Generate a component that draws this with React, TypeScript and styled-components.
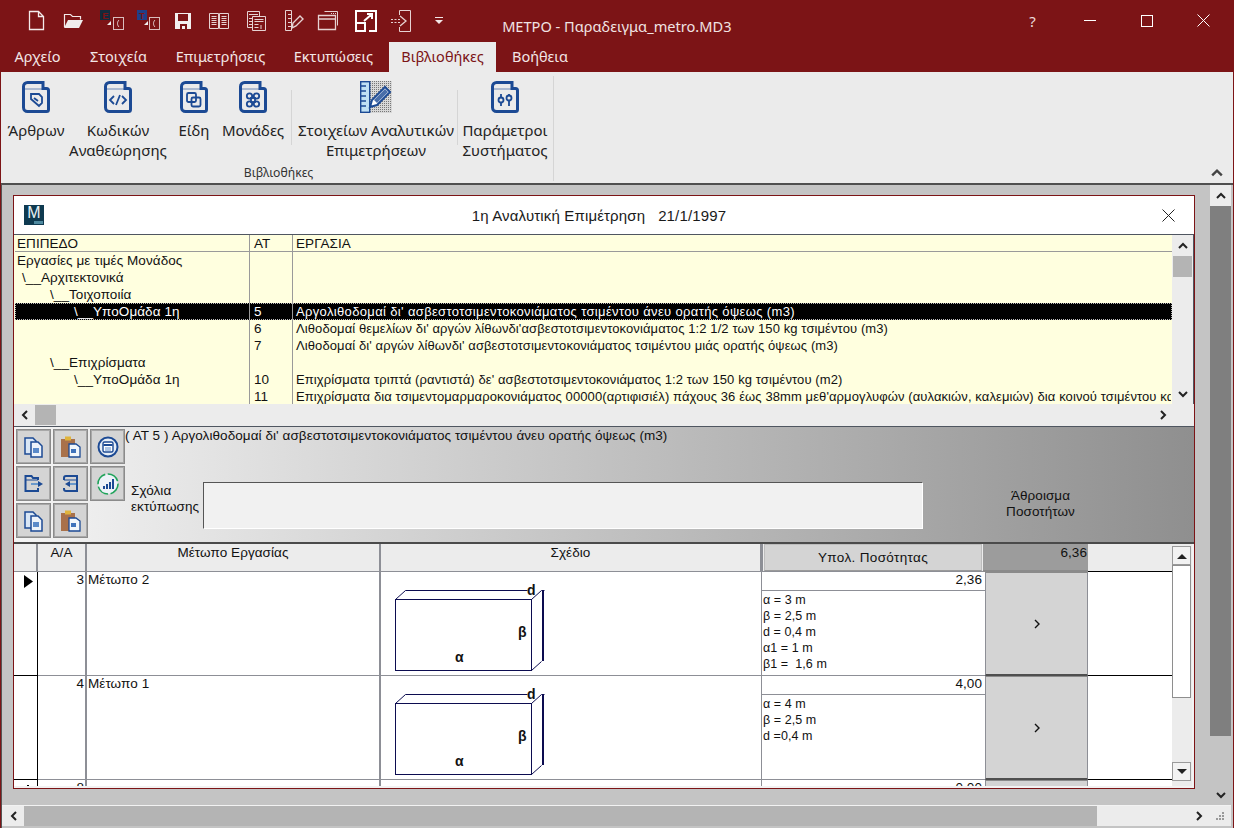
import React from "react";
import styled, { createGlobalStyle } from "styled-components";

const RED = "#7c1416";
const BLUE = "#1c4a94";
const GRIDLINE = "#8d8f96";

const Global = createGlobalStyle`
  html, body { margin: 0; padding: 0; background: ${RED}; overflow: hidden; }
  * { box-sizing: border-box; }
`;

const AppWindow = styled.div`
  width: 1234px; height: 828px; background: ${RED};
  display: flex; flex-direction: column; padding: 0 1px;
  font-family: "Liberation Sans", Arial, sans-serif; font-size: 13.5px; letter-spacing: .07px; color: #111; overflow: hidden;
`;
const TitleBar = styled.div`height: 42px; display: flex; align-items: center; flex: none; padding-bottom: 1px; letter-spacing: 0;`;
const Qat = styled.div`display: flex; margin-left: 17px;`;
const QatBtn = styled.div`width: 36.6px; height: 24px; display: flex; justify-content: center; svg { display:block; overflow: visible; }`;
const AppTitle = styled.div`margin: 11px 0 0 45px; font-family: "Noto Sans", sans-serif; font-size: 14.6px; color: #f1e3e3; white-space: nowrap;`;
const WinControls = styled.div`margin-left: auto; display: flex; margin-right: 1px;`;
const WinBtn = styled.div`width: 57px; height: 30px; display: flex; align-items: center; justify-content: center; color: #ecdcdc; font-family:"Noto Sans",sans-serif; font-size: 15px;`;

const Tabs = styled.div`height: 30px; display: flex; flex: none; letter-spacing: 0;`;
const Tab = styled.div<{ $active?: boolean; $w: number }>`
  width: ${p => p.$w}px; height: 30px; display: flex; align-items: center; justify-content: center;
  font-family: "Noto Sans", sans-serif; font-size: 14.5px; padding-bottom: 2px;
  color: ${p => (p.$active ? RED : "#f3e6e6")};
  background: ${p => (p.$active ? "#ebebeb" : "transparent")};
`;

const Ribbon = styled.div`height: 111px; background: #ebebeb; flex: none; position: relative; display: flex; letter-spacing: 0;`;
const RibbonGroup = styled.div`width: 553px; padding-left: 3px; border-right: 1px solid #d5d5d5; margin: 4px 0 2px; display: flex; flex-direction: column; justify-content: space-between;`;
const RibbonItems = styled.div`display: flex;`;
const RibbonItem = styled.div<{ $w: number }>`
  width: ${p => p.$w}px; flex: none; display: flex; flex-direction: column; align-items: center; padding-top: 5px;
  svg { display: block; margin-bottom: 7px; }
`;
const RibbonLabel = styled.div`
  font-family: "Noto Sans", sans-serif; font-size: 15px; line-height: 20px; color: #222; text-align: center; white-space: nowrap;
`;
const RibbonSep = styled.div<{ $l: number; $r: number }>`width: 1px; height: 55px; flex: none; background: #d5d5d5; margin: 14px ${p => p.$r}px 0 ${p => p.$l}px;`;
const GroupLabel = styled.div`text-align: center; font-family: "Noto Sans", sans-serif; font-size: 12.2px; color: #333; line-height: 16px;`;
const Collapse = styled.div`position: absolute; right: 10px; bottom: 4px; svg { display: block; }`;

const Mdi = styled.div`
  flex: 1; min-height: 0; display: grid; grid-template-columns: 1fr 21px; grid-template-rows: 1fr 20px;
  background: #c4c4c4; border-top: 2px solid #4f4f4f; border-left: 1px solid #555; padding: 0 2px 2px 0;
`;
const MdiCanvas = styled.div`padding: 10px 0 0 11px; min-width: 0; min-height: 0; border-bottom: 1px solid #f2f2f2;`;
const MdiV = styled.div`display: flex; flex-direction: column; background: #c4c4c4; border-bottom: 1px solid #f2f2f2;`;
const ArrowBox = styled.div<{ $h?: number; $bg?: string }>`
  height: ${p => p.$h ?? 20}px; flex: none; display: flex; align-items: center; justify-content: center; background: ${p => p.$bg ?? "#ececec"};
  svg { display: block; }
`;
const MdiThumb = styled.div`height: 530px; background: #7f7f7f; flex: none;`;
const Fill = styled.div`flex: 1;`;
const MdiH = styled.div`display: flex; grid-column: 1 / 3; background: #ececec; height: 20px; padding-left: 1px;`;
const HArrow = styled.div<{ $w?: number }>`width: ${p => p.$w ?? 21}px; flex: none; display: flex; align-items: center; justify-content: center; svg { display: block; }`;
const MdiHThumb = styled.div`width: 1073px; background: #b4b4b4; flex: none;`;

const Child = styled.div`
  width: 1182px; height: 594px; border: 1px solid ${RED}; background: #f2f2f2;
  display: flex; flex-direction: column; overflow: hidden; position: relative;
`;
const ChildTitle = styled.div`
  height: 39px; flex: none; background: #fff; border-bottom: 1px solid #4f5660;
  display: flex; align-items: center; padding: 0 19px 0 10px; position: relative;
`;
const Logo = styled.div`
  width: 20px; height: 20px; background: #0f3a50; color: #e8f2f5; font-size: 16px; line-height: 16px; text-align: center; position: relative; letter-spacing: 0;
  &::after { content: ""; position: absolute; right: 1px; bottom: 1px; width: 9px; height: 3px; background: #4f8aa0; }
`;
const ChildCaption = styled.div`
  position: absolute; left: 0; right: 10px; text-align: center; font-size: 15px; letter-spacing: .15px; color: #1a1a1a; white-space: pre;
`;
const CloseX = styled.div`margin-left: auto; svg { display: block; }`;

const Upper = styled.div`height: 169px; flex: none; display: flex; border-right: 1px solid #4f5660;`;
const TreeGrid = styled.div`flex: 1; min-width: 0; background: #ffffdf; padding-left: 1px; overflow: hidden;`;
const TreeRow = styled.div<{ $selected?: boolean; $head?: boolean }>`
  display: grid; grid-template-columns: 235px 43px 878px; height: 17px; line-height: 17px; white-space: nowrap; overflow: hidden;
  background: ${p => (p.$selected ? "#000" : "transparent")};
  color: ${p => (p.$selected ? "#fff" : "#111")};
  ${p => p.$head && `border-bottom: 1px solid #9a9a9a;`}
  ${p => p.$selected && `outline: 1px dotted #bbb; outline-offset: -1px;`}
`;
const TreeCell = styled.div<{ $indent?: number }>`
  padding-left: ${p => 2 + (p.$indent ?? 0)}px; border-right: 1px solid #9a9a9a; overflow: hidden;
  &:last-child { border-right: none; padding-left: 3px; }
  &:nth-child(2) { padding-left: 4px; }
`;
const WorkCell = styled(TreeCell)<{ $wide?: boolean }>`
  font-size: 13px; letter-spacing: ${p => (p.$wide ? ".35px" : ".1px")};
`;
const VBar = styled.div<{ $w?: number }>`width: ${p => p.$w ?? 20}px; flex: none; background: #ececec; display: flex; flex-direction: column;`;
const SmallThumb = styled.div`height: 21px; margin: 0 1px; background: #b4b4b4; flex: none;`;
const HBar = styled.div`height: 23px; flex: none; background: #ececec; display: flex; border-bottom: 1px solid #4f5660;`;
const HThumb = styled.div`width: 21px; margin: 1px 0; background: #b4b4b4;`;
const Spacer = styled.div`flex: 1;`;

const Panel = styled.div`
  height: 117px; flex: none; display: flex; border-bottom: 2px solid #4a4a4a;
  background: linear-gradient(90deg, #f4f4f4 0%, #8f8f8f 100%);
`;
const ToolGrid = styled.div`
  width: 111px; flex: none; display: grid; grid-template-columns: repeat(3, 35px); grid-auto-rows: 35px; gap: 2px; padding: 2px 0 0 2px; align-content: start;
`;
const ToolBtn = styled.div`
  background: #d4d4d4; border: 1px solid #8b8b8b; box-shadow: inset 0 0 0 1px #a8a8a8; display: flex; align-items: center; justify-content: center;
  svg { display: block; }
`;
const PanelBody = styled.div`flex: 1; display: flex; flex-direction: column; min-width: 0;`;
const PanelHeading = styled.div`height: 20px; line-height: 18px; white-space: nowrap;`;
const PanelRow = styled.div`display: flex; align-items: flex-start; margin-top: 35px; padding-left: 6px;`;
const CommentLabel = styled.div`width: 72px; line-height: 16px; margin-top: 1px; flex: none;`;
const CommentBox = styled.div`
  width: 720px; height: 47px; background: #f1f1f1;
  border: 1px solid; border-color: #555 #fff #fff #555; flex: none;
`;
const SumLabel = styled.div`width: 235px; margin-top: 6px; text-align: center; line-height: 16px; flex: none;`;

const Lower = styled.div`flex: 1; min-height: 0; display: flex; background: #f2f2f2; overflow: hidden;`;
const Table = styled.div`
  width: 1158px; height: 242px; flex: none; overflow: hidden; background: #fff;
  display: grid; grid-template-columns: 24px 49px 294px 381px 223px 103px 84px;
  grid-template-rows: 28px 104px 104px 104px;
`;
const Head = styled.div<{ $line?: boolean }>`
  background: #ececec; text-align: center; line-height: 16px; padding-top: 1px;
  border-bottom: 1px solid ${p => (p.$line ? "#000" : GRIDLINE)};
  ${p => p.$line === undefined && `border-right: 2px solid ${GRIDLINE};`}
`;
const HeadBtn = styled.div`
  background: #ececec; padding: 0 3px 0 1px; border-bottom: 1px solid ${GRIDLINE}; border-left: 1px solid ${GRIDLINE};
  & > div { height: 27px; background: #d4d4d4; border: 1px solid #bdbdbd; border-bottom: 1px solid #9a9a9a; text-align: center; line-height: 25px; letter-spacing: .35px; }
`;
const HeadSum = styled.div`background: #9c9c9c; margin-left: -2px; text-align: right; padding: 1px 1px 0 0; line-height: 15px; border-bottom: 2px solid #8a8a8a;`;
const IndicatorCell = styled.div`border-right: 1px solid #000; border-bottom: 1px solid #000; padding: 3px 0 0 10px; position: relative; svg { display: block; }`;
const Dot = styled.div`width: 2px; height: 2px; background: #000; margin: 2px 0 0 3px;`;
const NumCell = styled.div`border-right: 2px solid ${GRIDLINE}; border-bottom: 1px solid ${GRIDLINE}; text-align: right; padding: 0 1px 0 0; line-height: 16px;`;
const NameCell = styled.div`border-right: 2px solid ${GRIDLINE}; border-bottom: 1px solid ${GRIDLINE}; padding-left: 1px; line-height: 16px;`;
const SketchCell = styled.div`border-right: 1px solid ${GRIDLINE}; border-bottom: 1px solid ${GRIDLINE}; svg { display: block; }`;
const CalcCell = styled.div`border-bottom: 1px solid ${GRIDLINE}; display: flex; flex-direction: column; min-height: 0; overflow: hidden;`;
const CalcValue = styled.div`height: 19px; flex: none; text-align: right; padding-right: 3px; line-height: 16px; border-bottom: 1px solid ${GRIDLINE};`;
const CalcLines = styled.div`padding: 1px 0 0 1px; line-height: 16px; white-space: pre; font-size: 12.5px;`;
const GoBtn = styled.div`
  background: #d4d4d4; border: 1px solid ${GRIDLINE}; border-bottom: 2px solid #4f4f4f; border-top: 1px solid #8a8a8a;
  display: flex; align-items: center; justify-content: center; svg { display: block; }
`;
const BlankCell = styled.div`border-bottom: 1px solid #000; background: #fff;`;
const LowerScroll = styled.div`width: 20px; height: 242px; flex: none; background: #ececec; display: flex; flex-direction: column; padding: 2px 1px 5px 0;`;
const LowerBtn = styled.div`height: 19px; flex: none; border: 1px solid #9a9a9a; background: #f2f2f2; display: flex; align-items: center; justify-content: center; svg { display: block; }`;
const LowerThumb = styled.div`height: 133px; flex: none; border: 1px solid #8e8e8e; background: #fff;`;

const Chevron = ({ dir, size = 10, c = "#222", w = 2 }: { dir: "u" | "d" | "l" | "r"; size?: number; c?: string; w?: number }) => {
  const d = { u: "M1 7l4-4 4 4", d: "M1 3l4 4 4-4", l: "M7 1L3 5l4 4", r: "M3 1l4 4-4 4" }[dir];
  return <svg width={size} height={size} viewBox="0 0 10 10"><path d={d} fill="none" stroke={c} strokeWidth={w} /></svg>;
};

const W = "#f4eaea";
const QatIcons: React.ReactNode[] = [
  <path key="a" d="M5.500 2.500h9l5 5v13h-14zM14.500 2.500v5h5" fill="none" stroke={W} strokeWidth="1.3" />,
  <g key="b"><path d="M3.500 18V5.500h6l2 2h8v3" fill="none" stroke={W} strokeWidth="1.2" /><path d="M3 19l4-8h15l-4 8z" fill="#f0eded" /></g>,
  <g key="c"><rect x="3" y="1" width="10" height="10" fill="#132a3c" /><text x="5.200" y="9.500" fontSize="9.500" fontWeight="bold" fontFamily="Liberation Sans" fill="#7c1416">E</text><path d="M10 16l4-4v4z" fill="#eee" /><rect x="16.500" y="8.500" width="10" height="12" fill="none" stroke="#d9bdbd" /><path d="M22 11c-2 2-2 5 0 7" fill="none" stroke="#e8d8d8" /></g>,
  <g key="d"><rect x="3" y="1" width="10" height="10" fill="#1f3f88" /><text x="5" y="9.500" fontSize="9.500" fontWeight="bold" fontFamily="Liberation Sans" fill="#7c1416">T</text><path d="M10 16l4-4v4z" fill="#eee" /><rect x="15.500" y="8.500" width="10" height="12" fill="none" stroke="#d9bdbd" /><path d="M21 11c-2 2-2 5 0 7" fill="none" stroke="#e8d8d8" /></g>,
  <path key="e" d="M4 4h16v16H4zM7 5v7h10V5zM9 15v5h2v-3h3v3h2v-5z" fill="#f3efef" fillRule="evenodd" />,
  <g key="f" fill="none" stroke="#e6d2d2"><path d="M2.500 4.500h9v15h-9zM12.500 4.500h9v15h-9z" /><path d="M4.500 7.500h5M4.500 9.500h5M4.500 11.500h5M4.500 13.500h5M4.500 15.500h5M14.500 7.500h5M14.500 9.500h5M14.500 11.500h5M14.500 13.500h5M14.500 15.500h5" /></g>,
  <g key="g" fill="none" stroke="#e6d2d2"><path d="M3.500 2.500h12v16h-12z" /><path d="M8.500 7.500h13v14h-13z" fill="#7c1416" /><path d="M5 5.500h9M5 9.500h3M5 12.500h3M5 15.500h3M10.500 10.500h9M10.500 12.500h9M10.500 15.500h4M10.500 18.500h4M17 16v4" /></g>,
  <g key="h" fill="none" stroke="#e6d2d2"><path d="M5.500 1.500h6v20h-6zM8 5.500h3M8 9.500h3M8 13.500h3M8 17.500h3" /><path d="M12 19l1-5 7-7 3 3-7 7z" strokeWidth="1.400" /></g>,
  <g key="i" fill="none" stroke="#e6d2d2"><path d="M7.500 2.500h13v14" /><path d="M1.500 6.500h17v14h-17zM1.500 10h17" strokeWidth="1.300" /><path d="M14 4.500h5" strokeDasharray="1 1" /></g>,
  <g key="j" fill="none" stroke="#fff" strokeWidth="2"><path d="M8 2h14v20H15M2 14V2h6M2 14v8h9v-8zM10 12l8-7M13 5h5v5" /></g>,
  <g key="k" fill="none" stroke="#e6d2d2"><path d="M9.500 1.500h11v21h-11V18M9.500 6V1.500" /><path d="M1 10.500h9M1 13.500h9" strokeDasharray="2 1.500" /><path d="M10 7l6 5-6 5" strokeWidth="1.300" /></g>,
  <path key="l" d="M8 8h8v1H8zM8 11h8l-4 4z" fill="#f2e6e6" />,
];

const BookFrame = ({ children }: { children: React.ReactNode }) => (
  <svg width="28" height="32" viewBox="0 0 28 32">
    <path d="M1.500 5.500a4 4 0 0 1 4-4h15.500v6h3.500a2 2 0 0 1 2 2v19a2 2 0 0 1-2 2h-19a4 4 0 0 1-4-4z" fill="#ebebeb" stroke={BLUE} strokeWidth="3" />
    <path d="M2 8h19" stroke={BLUE} strokeWidth="1" opacity=".6" />
    <g fill="none" stroke={BLUE} strokeWidth="1.800">{children}</g>
  </svg>
);

const RulerPencil = () => (
  <svg width="32" height="32" viewBox="0 0 32 32">
    <defs><pattern id="dots" width="2" height="2" patternUnits="userSpaceOnUse"><rect width="2" height="2" fill="#d8d8d8" /><rect width="1" height="1" fill="#777" /></pattern></defs>
    <rect x="9" y="0" width="23" height="32" fill="url(#dots)" />
    <rect x=".7" y=".7" width="9" height="30.600" fill="#bfe0f4" stroke={BLUE} strokeWidth="1.400" />
    <path d="M1 5h5M1 10h5M1 15h5M1 20h5M1 25h5" stroke={BLUE} strokeWidth="1.300" />
    <path d="M10 26l2-7L25 6l5 5-13 13z" fill="#fff" stroke={BLUE} strokeWidth="2" />
    <path d="M14 19l11-11 3 3-11 11z" fill={BLUE} opacity=".8" />
  </svg>
);

const Docs = () => (
  <svg width="24" height="24" viewBox="0 0 24 24"><g fill="#d9e6f5" stroke={BLUE} strokeWidth="1.500"><path d="M3 3h8l3 3v13H3z" /><path d="M9 7h7l4 4v11H9z" fill="#eef3fa" /></g><rect x="11" y="13" width="6" height="5" fill="#5b8ac9" /></svg>
);
const Clip = () => (
  <svg width="24" height="24" viewBox="0 0 24 24"><rect x="2" y="4" width="14" height="18" fill="#a9714a" /><rect x="6" y="1.500" width="6" height="4" fill="#e0b43c" /><path d="M10 9h7l4 3v10H10z" fill="#f2f6fb" stroke={BLUE} strokeWidth="1.300" /><rect x="12" y="14" width="5" height="4" fill="#3f72bb" /></svg>
);
const CalcCircle = () => (
  <svg width="22" height="22" viewBox="0 0 22 22"><circle cx="11" cy="11" r="9.500" fill="#e7eef7" stroke={BLUE} strokeWidth="2" /><rect x="6" y="6" width="10" height="10" rx="1.500" fill="#fff" stroke={BLUE} strokeWidth="1.400" /><path d="M6.500 9h9" stroke={BLUE} strokeWidth="2" /><path d="M8 12h6M8 14h6" stroke="#5b8ac9" /></svg>
);
const Out = () => (
  <svg width="24" height="22" viewBox="0 0 24 22"><path d="M16 7V5h-5L9.500 3H3.500v15H16v-3" fill="none" stroke={BLUE} strokeWidth="2" /><path d="M3.500 7H16" stroke={BLUE} /><path d="M9 11h8" stroke="#4f8ac9" strokeWidth="1.600" /><path d="M16 8l5 3-5 3z" fill={BLUE} /></svg>
);
const In = () => (
  <svg width="24" height="22" viewBox="0 0 24 22"><path d="M5 7V5a2 2 0 0 1 2-2h11v15H7a2 2 0 0 1-2-2v-1" fill="none" stroke={BLUE} strokeWidth="2" /><path d="M5 7h13" stroke={BLUE} /><path d="M9 11h8" stroke="#4f8ac9" strokeWidth="1.600" /><path d="M11 8l-5 3 5 3z" fill={BLUE} /></svg>
);
const ChartCircle = () => (
  <svg width="24" height="24" viewBox="0 0 24 24"><circle cx="12" cy="12" r="10" fill="#eef2f8" stroke="#1fa35a" strokeWidth="1.600" strokeDasharray="13 2.500" /><path d="M7 17v-3h2v3zM10 17v-5h2v5zM13 17v-7h2v7zM16 17V7h2v10z" fill={BLUE} /></svg>
);

const Box = () => (
  <svg width="200" height="103" viewBox="0 0 200 103">
    <g fill="none" stroke="#0c0c50" strokeWidth="1">
      <rect x="14.500" y="27.500" width="136" height="71" />
      <path d="M14.500 27.500l10-9h122M150.500 27.500l10-9h3M150.500 98.500l10-9" />
      <path d="M162 18v71" strokeWidth="2" />
    </g>
    <g fontFamily="Liberation Sans, sans-serif" fontWeight="bold" fontSize="14" fill="#111">
      <text x="146" y="23">d</text>
      <text x="137" y="65">β</text>
      <text x="74" y="90">α</text>
    </g>
  </svg>
);

const Arrow = () => <svg width="9" height="13" viewBox="0 0 9 13"><path d="M0 0l9 6.500-9 6.500z" fill="#000" /></svg>;

const tree: { a: string; i?: number; b?: string; c?: string; s?: boolean }[] = [
  { a: "Εργασίες με τιμές Μονάδος" },
  { a: "\\__Αρχιτεκτονικά", i: 5 },
  { a: "\\__Τοιχοποιία", i: 33 },
  { a: "\\__ΥποΟμάδα 1η", i: 57, b: "5", c: "Αργολιθοδομαί δι' ασβεστοτσιμεντοκονιάματος τσιμέντου άνευ ορατής όψεως (m3)", s: true },
  { a: "", b: "6", c: "Λιθοδομαί θεμελίων δι' αργών λίθωνδι'ασβεστοτσιμεντοκονιάματος 1:2 1/2 των 150 kg τσιμέντου (m3)" },
  { a: "", b: "7", c: "Λιθοδομαί δι' αργών λίθωνδι' ασβεστοτσιμεντοκονιάματος τσιμέντου μιάς ορατής όψεως (m3)" },
  { a: "\\__Επιχρίσματα", i: 33 },
  { a: "\\__ΥποΟμάδα 1η", i: 57, b: "10", c: "Επιχρίσματα τριπτά (ραντιστά) δε' ασβεστοτσιμεντοκονιάματος 1:2 των 150 kg τσιμέντου (m2)" },
  { a: "", b: "11", c: "Επιχρίσματα δια τσιμεντομαρμαροκονιάματος 00000(αρτιφισιέλ) πάχους 36 έως 38mm μεθ'αρμογλυφών (αυλακιών, καλεμιών) δια κοινού τσιμέντου κα" },
];

const rows = [
  { n: "3", name: "Μέτωπο 2", value: "2,36", lines: "α = 3 m\nβ = 2,5 m\nd = 0,4 m\nα1 = 1 m\nβ1 =  1,6 m", current: true },
  { n: "4", name: "Μέτωπο 1", value: "4,00", lines: "α = 4 m\nβ = 2,5 m\nd =0,4 m" },
  { n: "8", name: "", value: "0,00", lines: "", partial: true },
];

const ribbonItems = [
  { w: 64, l: "Άρθρων", g: <path d="M9 13h8l3 3v6l-3 3-8-7zM12 17l4 3" /> },
  { w: 100, l: "Κωδικών\nΑναθεώρησης", g: <path d="M10 15l-4 4 4 4M18 15l4 4-4 4M16 14l-4 10" /> },
  { w: 52, l: "Είδη", g: <><rect x="7" y="12" width="9" height="9" rx="1.500" /><rect x="11.500" y="16.500" width="9" height="9" rx="1.500" /></> },
  { w: 66, l: "Μονάδες", g: <><circle cx="10.500" cy="15" r="2.700" /><circle cx="17.500" cy="15" r="2.700" /><circle cx="10.500" cy="23" r="2.700" /><circle cx="17.500" cy="23" r="2.700" /><rect x="12" y="17" width="4" height="4" /></> },
];

export default function App() {
  return (
    <>
      <Global />
      <AppWindow>
        <TitleBar>
          <Qat>
            {QatIcons.map((ic, i) => (
              <QatBtn key={i}><svg width="24" height="24" viewBox="0 0 24 24">{ic}</svg></QatBtn>
            ))}
          </Qat>
          <AppTitle>ΜΕΤΡΟ - Παραδειγμα_metro.MD3</AppTitle>
          <WinControls>
            <WinBtn>?</WinBtn>
            <WinBtn><svg width="12" height="2"><rect width="12" height="1" fill="#fff" /></svg></WinBtn>
            <WinBtn><svg width="12" height="12"><rect x=".5" y=".5" width="11" height="11" fill="none" stroke="#fff" /></svg></WinBtn>
            <WinBtn><svg width="13" height="13"><path d="M.5.5l12 12M12.500.5l-12 12" stroke="#fff" fill="none" /></svg></WinBtn>
          </WinControls>
        </TitleBar>
        <Tabs>
          <Tab $w={73}>Αρχείο</Tab>
          <Tab $w={89}>Στοιχεία</Tab>
          <Tab $w={115}>Επιμετρήσεις</Tab>
          <Tab $w={111}>Εκτυπώσεις</Tab>
          <Tab $w={107} $active>Βιβλιοθήκες</Tab>
          <Tab $w={88}>Βοήθεια</Tab>
        </Tabs>
        <Ribbon>
          <RibbonGroup>
            <RibbonItems>
              {ribbonItems.map(it => (
                <RibbonItem key={it.l} $w={it.w}>
                  <BookFrame>{it.g}</BookFrame>
                  <RibbonLabel>{it.l.split("\n").map(t => <div key={t}>{t}</div>)}</RibbonLabel>
                </RibbonItem>
              ))}
              <RibbonSep $l={5} $r={4} />
              <RibbonItem $w={160}>
                <RulerPencil />
                <RibbonLabel><div>Στοιχείων Αναλυτικών</div><div>Επιμετρήσεων</div></RibbonLabel>
              </RibbonItem>
              <RibbonSep $l={1} $r={1} />
              <RibbonItem $w={92}>
                <BookFrame>
                  <path d="M10 13v3M10 22v3M18 13v1M18 20v5" />
                  <circle cx="10" cy="19" r="2.500" /><circle cx="18" cy="17" r="2.500" />
                </BookFrame>
                <RibbonLabel><div>Παράμετροι</div><div>Συστήματος</div></RibbonLabel>
              </RibbonItem>
            </RibbonItems>
            <GroupLabel>Βιβλιοθήκες</GroupLabel>
          </RibbonGroup>
          <Collapse><Chevron dir="u" size={12} c="#444" /></Collapse>
        </Ribbon>
        <Mdi>
          <MdiCanvas>
            <Child>
              <ChildTitle>
                <Logo>M</Logo>
                <ChildCaption>1η Αναλυτική Επιμέτρηση   21/1/1997</ChildCaption>
                <CloseX><svg width="13" height="13"><path d="M.5.5l12 12M12.500.5l-12 12" stroke="#222" fill="none" /></svg></CloseX>
              </ChildTitle>
              <Upper>
                <TreeGrid>
                  <TreeRow $head><TreeCell>ΕΠΙΠΕΔΟ</TreeCell><TreeCell>ΑΤ</TreeCell><TreeCell>ΕΡΓΑΣΙΑ</TreeCell></TreeRow>
                  {tree.map((r, i) => (
                    <TreeRow key={i} $selected={r.s}>
                      <TreeCell $indent={r.i}>{r.a}</TreeCell>
                      <TreeCell>{r.b}</TreeCell>
                      <WorkCell $wide={r.s}>{r.c}</WorkCell>
                    </TreeRow>
                  ))}
                </TreeGrid>
                <VBar $w={21}>
                  <ArrowBox $h={21}><Chevron dir="u" /></ArrowBox>
                  <SmallThumb />
                  <Fill />
                  <ArrowBox $h={21}><Chevron dir="d" /></ArrowBox>
                </VBar>
              </Upper>
              <HBar>
                <HArrow><Chevron dir="l" /></HArrow>
                <HThumb />
                <Spacer />
                <HArrow><Chevron dir="r" /></HArrow>
                <HArrow />
              </HBar>
              <Panel>
                <ToolGrid>
                  <ToolBtn><Docs /></ToolBtn>
                  <ToolBtn><Clip /></ToolBtn>
                  <ToolBtn><CalcCircle /></ToolBtn>
                  <ToolBtn><Out /></ToolBtn>
                  <ToolBtn><In /></ToolBtn>
                  <ToolBtn><ChartCircle /></ToolBtn>
                  <ToolBtn><Docs /></ToolBtn>
                  <ToolBtn><Clip /></ToolBtn>
                </ToolGrid>
                <PanelBody>
                  <PanelHeading>( ΑΤ 5 ) Αργολιθοδομαί δι' ασβεστοτσιμεντοκονιάματος τσιμέντου άνευ ορατής όψεως (m3)</PanelHeading>
                  <PanelRow>
                    <CommentLabel>Σχόλια<br />εκτύπωσης</CommentLabel>
                    <CommentBox />
                    <SumLabel>Άθροισμα<br />Ποσοτήτων</SumLabel>
                  </PanelRow>
                </PanelBody>
              </Panel>
              <Lower>
                <Table>
                  <Head />
                  <Head>Α/Α</Head>
                  <Head>Μέτωπο Εργασίας</Head>
                  <Head>Σχέδιο</Head>
                  <HeadBtn><div>Υπολ. Ποσότητας</div></HeadBtn>
                  <HeadSum>6,36</HeadSum>
                  <Head $line />
                  {rows.map(r => (
                    <React.Fragment key={r.n}>
                      <IndicatorCell>{r.current ? <Arrow /> : r.partial ? <Dot /> : null}</IndicatorCell>
                      <NumCell>{r.n}</NumCell>
                      <NameCell>{r.name}</NameCell>
                      <SketchCell>{!r.partial && <Box />}</SketchCell>
                      <CalcCell>
                        <CalcValue>{r.value}</CalcValue>
                        <CalcLines>{r.lines}</CalcLines>
                      </CalcCell>
                      <GoBtn><Chevron dir="r" c="#111" w={1.4} /></GoBtn>
                      <BlankCell />
                    </React.Fragment>
                  ))}
                </Table>
                <LowerScroll>
                  <LowerBtn><svg width="10" height="6"><path d="M0 6l5-5 5 5z" fill="#222" /></svg></LowerBtn>
                  <LowerThumb />
                  <Fill />
                  <LowerBtn><svg width="10" height="6"><path d="M0 0l5 5 5-5z" fill="#222" /></svg></LowerBtn>
                </LowerScroll>
              </Lower>
            </Child>
          </MdiCanvas>
          <MdiV>
            <ArrowBox $h={21}><Chevron dir="u" /></ArrowBox>
            <MdiThumb />
            <Fill />
            <ArrowBox $h={20} $bg="#c4c4c4"><Chevron dir="d" /></ArrowBox>
          </MdiV>
          <MdiH>
            <HArrow><Chevron dir="l" /></HArrow>
            <MdiHThumb />
            <Spacer />
            <HArrow><Chevron dir="r" /></HArrow>
            <HArrow $w={22}>
              <svg width="10" height="10"><path d="M7 1h2v2H7zM4 4h2v2H4zM7 4h2v2H7zM1 7h2v2H1zM4 7h2v2H4zM7 7h2v2H7z" fill="#999" /></svg>
            </HArrow>
          </MdiH>
        </Mdi>
      </AppWindow>
    </>
  );
}
